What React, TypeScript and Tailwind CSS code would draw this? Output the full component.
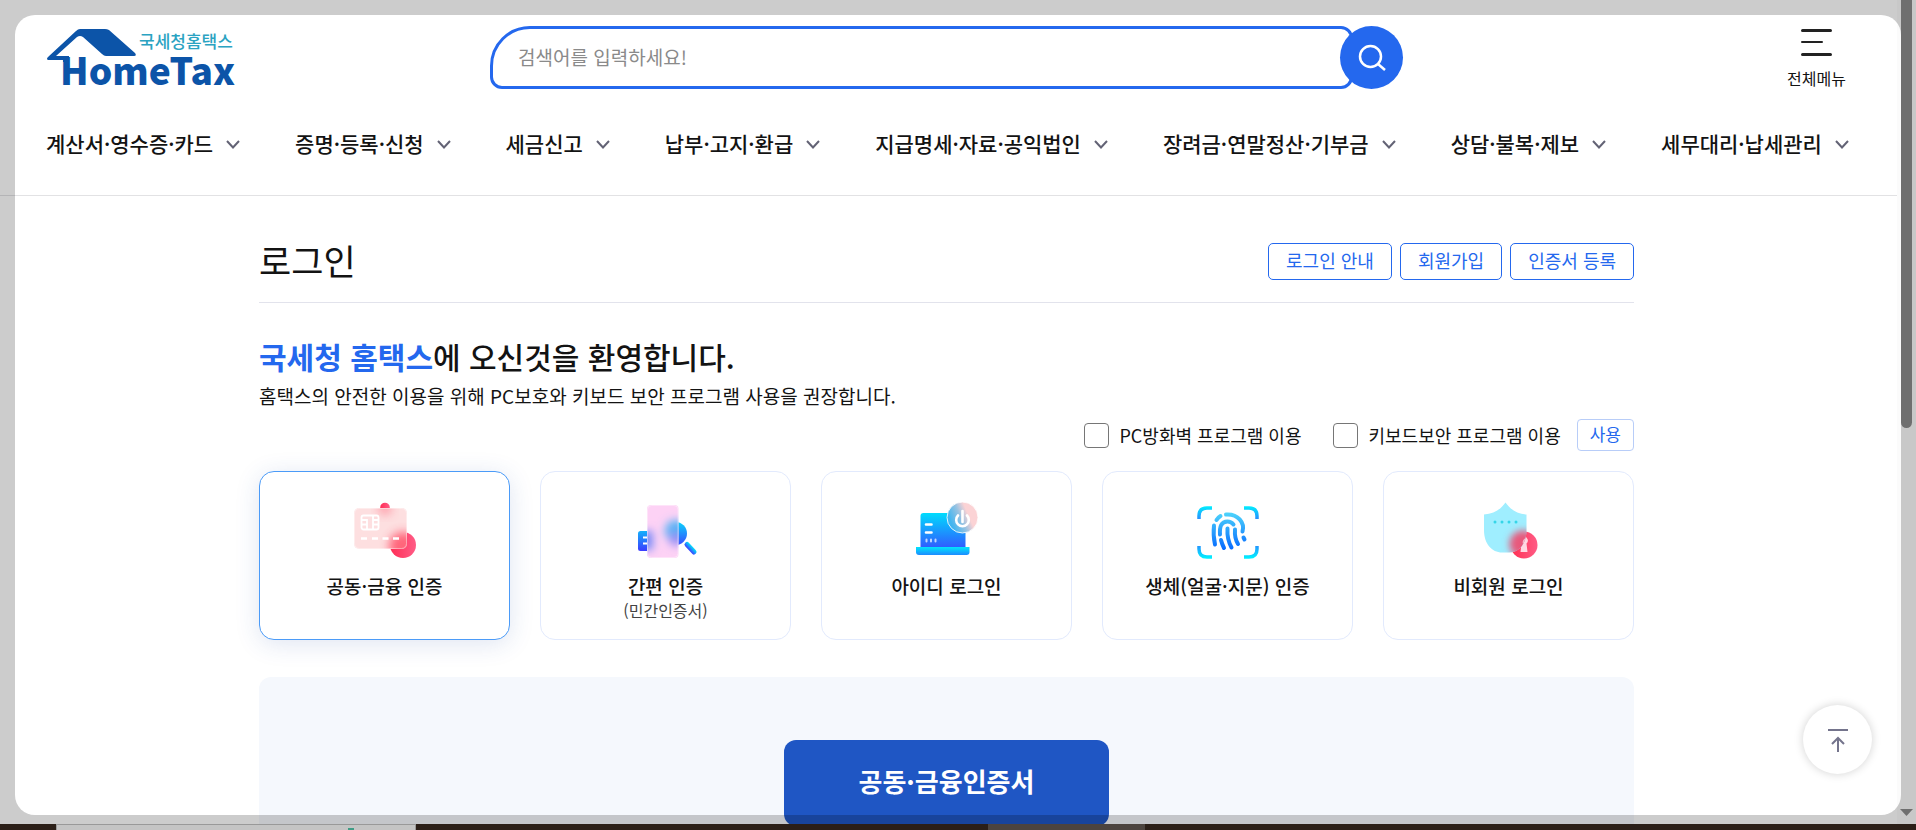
import React, { useState } from "react";

const menus = [
  "계산서·영수증·카드",
  "증명·등록·신청",
  "세금신고",
  "납부·고지·환급",
  "지급명세·자료·공익법인",
  "장려금·연말정산·기부금",
  "상담·불복·제보",
  "세무대리·납세관리",
];

const links = ["로그인 안내", "회원가입", "인증서 등록"];

function Logo() {
  return (
    <svg width="192" height="61" viewBox="0 0 192 61" role="img" aria-label="국세청홈택스 HomeTax">
      <path
        d="M1 29 L29 3 Q31 1 33 1 H58 Q60 1 62 2 L88 25 Q90 28 87 28 H59 Q57 28 55 26 L36 9 Q33 7 30 9 L9 28 H22 V34 H16 V32 H1 Q-1 31 1 29 Z"
        fill="#0c54a8"
      />
      <text x="92" y="20" fontSize="17" fontWeight="500" fill="#2ba3c2">
        국세청홈택스
      </text>
      <text x="13" y="57" fontSize="37" fontWeight="900" fill="#0c54a8">
        HomeTax
      </text>
    </svg>
  );
}

function CardIcon() {
  return (
    <svg width="64" height="64" viewBox="0 0 64 64" aria-hidden="true">
      <defs>
        <linearGradient id="card-red">
          <stop offset="0" stopColor="#ff2d55" />
          <stop offset="1" stopColor="#ff5c86" />
        </linearGradient>
        <clipPath id="card-clip">
          <rect x="1" y="10" width="53" height="41" rx="5" />
        </clipPath>
        <filter id="card-blur" x="-50%" y="-50%" width="200%" height="200%">
          <feGaussianBlur stdDeviation="5" />
        </filter>
      </defs>
      <circle cx="32" cy="9.5" r="4.8" fill="url(#card-red)" />
      <circle cx="50" cy="47" r="13" fill="url(#card-red)" />
      <rect x="1" y="10" width="53" height="41" rx="5" fill="#fddfe0" />
      <g clipPath="url(#card-clip)">
        <circle cx="32" cy="10" r="7" fill="#ff8595" opacity="0.7" filter="url(#card-blur)" />
        <circle cx="50" cy="48" r="14" fill="#ff5870" opacity="0.9" filter="url(#card-blur)" />
      </g>
      <rect x="1.5" y="10.5" width="52" height="40" rx="5" fill="none" stroke="#fff" strokeOpacity="0.4" />
      <g fill="none" stroke="#fff" strokeWidth="1.8">
        <rect x="8.5" y="17.5" width="17" height="14" rx="2" />
        <path d="M8.5 22 H14 V31 M8.5 26.5 H14 M20 17.5 V31 M20 22 H25 M20 26.5 H25" />
      </g>
      <path d="M8 40.5 H14 M19 40.5 H25 M29.5 40.5 H35.5 M40 40.5 H46" stroke="#fff" strokeWidth="2.4" />
    </svg>
  );
}

function PhoneIcon() {
  return (
    <svg width="64" height="64" viewBox="0 0 64 64" aria-hidden="true">
      <defs>
        <linearGradient id="phone-blue" x2="0" y2="1">
          <stop offset="0" stopColor="#0ad3fb" />
          <stop offset="1" stopColor="#3a4bff" />
        </linearGradient>
        <linearGradient id="phone-left" x2="0" y2="1">
          <stop offset="0" stopColor="#14b0fb" />
          <stop offset="1" stopColor="#3b3bff" />
        </linearGradient>
        <linearGradient id="phone-handle" x1="0.7" y1="0.3" x2="0.3" y2="0.7">
          <stop offset="0" stopColor="#05d5fb" />
          <stop offset="1" stopColor="#3a4bff" />
        </linearGradient>
        <clipPath id="phone-clip">
          <rect x="13" y="7" width="31.5" height="53" rx="4" />
        </clipPath>
        <filter id="phone-blur" x="-50%" y="-50%" width="200%" height="200%">
          <feGaussianBlur stdDeviation="4.5" />
        </filter>
      </defs>
      <rect x="4" y="33" width="16" height="20" rx="2.5" fill="url(#phone-left)" />
      <path d="M9 39.5 H14 M9 45.5 H14" stroke="#fff" strokeWidth="2" />
      <circle cx="41.5" cy="35.5" r="11.5" fill="url(#phone-blue)" />
      <path d="M53 46.5 L60 54" stroke="url(#phone-handle)" strokeWidth="5" strokeLinecap="round" />
      <rect x="13" y="7" width="31.5" height="53" rx="4" fill="#fdd2f5" />
      <g clipPath="url(#phone-clip)">
        <g filter="url(#phone-blur)">
          <rect x="4" y="33" width="15" height="19" fill="#7c8cf8" />
          <circle cx="42" cy="33" r="11" fill="#55b2f5" />
          <circle cx="42" cy="41" r="7" fill="#968df5" />
        </g>
      </g>
      <rect x="13.5" y="7.5" width="30.5" height="52" rx="4" fill="none" stroke="#fff" strokeOpacity="0.4" />
    </svg>
  );
}

function LaptopIcon() {
  return (
    <svg width="64" height="64" viewBox="0 0 64 64" aria-hidden="true">
      <defs>
        <linearGradient id="laptop-screen" x2="0" y2="1">
          <stop offset="0" stopColor="#00dcfd" />
          <stop offset="1" stopColor="#305cff" />
        </linearGradient>
        <linearGradient id="laptop-base" x2="0" y2="1">
          <stop offset="0" stopColor="#00e6fc" />
          <stop offset="1" stopColor="#1d8bff" />
        </linearGradient>
        <linearGradient id="laptop-power" x1="0.15" y1="0.7" x2="0.85" y2="0.4">
          <stop offset="0" stopColor="#42b5f0" />
          <stop offset="0.45" stopColor="#95c2e2" />
          <stop offset="0.8" stopColor="#fbd3d5" />
        </linearGradient>
      </defs>
      <path d="M5.5 49.5 V18 Q5.5 15 8.5 15 H50.5 V49.5 Z" fill="url(#laptop-screen)" />
      <path d="M1 49 H54.5 V54 Q54.5 57 51.5 57 H4 Q1 57 1 54 Z" fill="url(#laptop-base)" />
      <g stroke="#fff" strokeLinecap="round" fill="none">
        <path d="M11 26.5 H16.5 M11 34.5 H16.5" strokeWidth="2.6" />
        <path d="M11.5 41.5 V43.5 M16 41.5 V43.5 M20.5 41.5 V43.5" strokeWidth="2" strokeOpacity="0.7" />
      </g>
      <circle cx="47.5" cy="19.5" r="15.5" fill="url(#laptop-power)" stroke="#fff" strokeOpacity="0.85" />
      <g stroke="#fff" strokeWidth="2.6" strokeLinecap="round" fill="none">
        <path d="M47.5 13 V24" />
        <path d="M43 17.5 A6.3 6.3 0 1 0 52 17.5" />
      </g>
    </svg>
  );
}

function FingerprintIcon() {
  return (
    <svg width="64" height="64" viewBox="0 0 64 64" fill="none" aria-hidden="true">
      <defs>
        <linearGradient id="frame-top" gradientUnits="userSpaceOnUse" x1="0" y1="8" x2="0" y2="22">
          <stop offset="0" stopColor="#00f0ff" />
          <stop offset="1" stopColor="#2b86ff" />
        </linearGradient>
        <linearGradient id="frame-bottom" gradientUnits="userSpaceOnUse" x1="0" y1="60" x2="0" y2="46">
          <stop offset="0" stopColor="#00f0ff" />
          <stop offset="1" stopColor="#2b86ff" />
        </linearGradient>
        <linearGradient id="finger" gradientUnits="userSpaceOnUse" x1="0" y1="14" x2="0" y2="51">
          <stop offset="0" stopColor="#4fd6fb" />
          <stop offset="1" stopColor="#066bff" />
        </linearGradient>
      </defs>
      <path d="M3 21 V18 Q3 10 11 10 H16 M48 10 H53 Q61 10 61 18 V21" stroke="url(#frame-top)" strokeWidth="3.5" />
      <path d="M3 48 V51 Q3 59 11 59 H16 M48 59 H53 Q61 59 61 51 V48" stroke="url(#frame-bottom)" strokeWidth="3.5" />
      <g stroke="url(#finger)" strokeWidth="4" strokeLinecap="round">
        <path d="M20.5 22 Q22 19.5 24.5 18" />
        <path d="M30 16.5 C42 15.5 49 25 46.5 33.5" />
        <path d="M18 27.5 C17.3 34 17.5 40 19 46.5" />
        <path d="M24 36.5 C23.5 29 25 23.5 31.5 23.5 Q35 23.5 37.5 26.5" />
        <path d="M25 42 Q26 46 28 50" />
        <path d="M31.5 30.5 C31 38 32.5 44 35.5 49.5" />
        <path d="M39 31.5 C38.5 38 39.5 42 42 46" />
        <path d="M47.5 39.5 L48.5 41.5" />
      </g>
    </svg>
  );
}

function ShieldIcon() {
  const shield = "M28.5 4.5 C33 11 40 16 49.5 16.5 V32 C49.5 46 42 54.5 32 54.5 H25 C15 54.5 7 46 7 32 V16.5 C17 16 24 11 28.5 4.5 Z";
  return (
    <svg width="64" height="64" viewBox="0 0 64 64" aria-hidden="true">
      <defs>
        <linearGradient id="shield-red">
          <stop offset="0" stopColor="#ff2d50" />
          <stop offset="1" stopColor="#ff5c86" />
        </linearGradient>
        <clipPath id="shield-clip">
          <path d={shield} />
        </clipPath>
        <filter id="shield-blur" x="-50%" y="-50%" width="200%" height="200%">
          <feGaussianBlur stdDeviation="3.5" />
        </filter>
      </defs>
      <circle cx="47" cy="47" r="13.5" fill="url(#shield-red)" />
      <path d="M47 38.5 A4 4 0 0 1 49.5 45.5 L50.5 54 H43.5 L44.5 45.5 A4 4 0 0 1 47 38.5 Z" fill="#ffd7e2" />
      <path d={shield} fill="#9feeff" />
      <g clipPath="url(#shield-clip)">
        <circle cx="46" cy="46" r="13.5" fill="#e8587b" filter="url(#shield-blur)" />
        <path d="M49.5 39.5 Q44.5 42 46 46 L44.5 52 L49.5 46 Z" fill="#fbd0dc" fillOpacity="0.8" />
      </g>
      <g fill="#35d5e8">
        <circle cx="18" cy="24" r="1.5" />
        <circle cx="25" cy="24" r="1.5" />
        <circle cx="32" cy="24" r="1.5" />
        <circle cx="39" cy="24" r="1.5" />
      </g>
    </svg>
  );
}

const methods = [
  { title: "공동·금융 인증", icon: <CardIcon /> },
  { title: "간편 인증", sub: "(민간인증서)", icon: <PhoneIcon /> },
  { title: "아이디 로그인", icon: <LaptopIcon /> },
  { title: "생체(얼굴·지문) 인증", icon: <FingerprintIcon /> },
  { title: "비회원 로그인", icon: <ShieldIcon /> },
];

function Header() {
  return (
    <header className="border-b border-[#e2e2e4]">
      <div className="grid grid-cols-[1fr_minmax(0,913px)_1fr] pt-[26px] pl-[47px] pr-[51px]">
        <a href="#" className="h-[63px] justify-self-start pt-0.5">
          <Logo />
        </a>
        <form className="flex items-center" onSubmit={(e) => e.preventDefault()}>
          <input
            type="text"
            aria-label="검색어"
            placeholder="검색어를 입력하세요!"
            className="h-[63px] min-w-0 flex-1 rounded-xl rounded-tl-[40px] border-[3px] border-[#2468ee] pb-0.5 pl-[25px] text-[19px] outline-none placeholder:text-[#8a8a8a]"
          />
          <button
            type="submit"
            aria-label="검색"
            className="-ml-[13px] flex size-[63px] items-center justify-center rounded-full bg-[#2468ee]"
          >
            <svg width="28" height="28" viewBox="0 0 28 28" fill="none" stroke="#fff" strokeWidth="2.5">
              <circle cx="12.5" cy="12.5" r="10.5" />
              <path d="M20 20 L27 26" />
            </svg>
          </button>
        </form>
        <button type="button" className="flex h-[63px] flex-col items-center gap-2.5 justify-self-end pt-[3px]">
          <svg width="31" height="27" viewBox="0 0 31 27" fill="none" stroke="#222" strokeLinecap="round" className="shrink-0">
            <path d="M1.5 1.5 H29.5 M1.5 25.5 H29.5" strokeWidth="3" />
            <path d="M1 13 H21" strokeWidth="2" />
          </svg>
          <span className="text-base leading-6">전체메뉴</span>
        </button>
      </div>
      <nav className="h-[106px] pt-1 pl-[46px] pr-12">
        <ul className="flex h-full items-center justify-between">
          {menus.map((menu) => (
            <li key={menu}>
              <button type="button" className="flex items-center gap-[13px] text-[21px] font-medium whitespace-nowrap">
                {menu}
                <svg width="14" height="9" viewBox="0 0 14 9" fill="none" stroke="#636375" strokeWidth="2">
                  <path d="M1 1 L7 7.5 L13 1" />
                </svg>
              </button>
            </li>
          ))}
        </ul>
      </nav>
    </header>
  );
}

function Scrollbar() {
  return (
    <div className="flex w-[19px] shrink-0 flex-col items-center justify-between bg-[#fbfbfb]" aria-hidden="true">
      <div className="h-[52%] w-[11px] rounded-b-md bg-[#8b8b8b]" />
      <svg width="13" height="7" viewBox="0 0 13 7" className="mb-2">
        <path d="M0 0 H13 L6.5 7 Z" fill="#8b8b8b" />
      </svg>
    </div>
  );
}

export default function App() {
  const [selected, setSelected] = useState(0);

  return (
    <div lang="ko" className="flex h-screen flex-col overflow-hidden bg-white font-['Noto_Sans_CJK_KR',sans-serif] text-[#131313]">
      <div className="relative flex min-h-0 flex-1 overflow-hidden">
        <div className="min-w-0 flex-1 overflow-hidden">
          <Header />
          <main className="pt-[26px] pr-1">
            <div className="mx-auto w-full max-w-[1375px]">
              <div className="flex h-[81px] items-center justify-between border-b border-[#e2e3ec] pb-0.5">
                <h1 className="pb-0.5 text-[35px] leading-10">로그인</h1>
                <div className="flex gap-2">
                  {links.map((link) => (
                    <button
                      key={link}
                      type="button"
                      className="h-[37px] rounded-[5px] border border-[#2468ee] px-[17px] pb-0.5 text-lg leading-6 text-[#2468ee]"
                    >
                      {link}
                    </button>
                  ))}
                </div>
              </div>

              <h2 className="mt-[33px] text-[30px] leading-10 font-medium">
                <strong className="font-bold text-[#2468ee]">국세청 홈택스</strong>에 오신것을 환영합니다.
              </h2>
              <p className="mt-1.5 text-[19px] leading-7">
                홈택스의 안전한 이용을 위해 PC보호와 키보드 보안 프로그램 사용을 권장합니다.
              </p>

              <div className="mt-[9px] flex items-center justify-end text-lg leading-6">
                <label className="mr-8 flex items-center gap-2.5">
                  <input type="checkbox" className="size-[25px] appearance-none rounded border border-[#767676] checked:bg-[#2468ee]" />
                  PC방화벽 프로그램 이용
                </label>
                <label className="mr-4 flex items-center gap-2.5">
                  <input type="checkbox" className="size-[25px] appearance-none rounded border border-[#767676] checked:bg-[#2468ee]" />
                  키보드보안 프로그램 이용
                </label>
                <button type="button" className="h-8 rounded border border-[#b8cdf8] px-3 pb-0.5 text-[17px] leading-6 text-[#2468ee]">
                  사용
                </button>
              </div>

              <div className="mt-5 grid grid-cols-5 gap-[30px]">
                {methods.map((method, i) => (
                  <button
                    key={method.title}
                    type="button"
                    onClick={() => setSelected(i)}
                    className={
                      "flex h-[169px] flex-col items-center rounded-[15px] border bg-white pt-[26px] " +
                      (i === selected
                        ? "border-[#4b9bf8] shadow-[0_4px_24px_rgba(40,80,170,0.15)]"
                        : "border-[#e2eafd]")
                    }
                  >
                    {method.icon}
                    <span className="mt-3 text-[19px] leading-6 font-medium">{method.title}</span>
                    {method.sub && <span className="text-base leading-6 text-[#444]">{method.sub}</span>}
                  </button>
                ))}
              </div>

              <section className="mt-[37px] flex justify-center rounded-xl bg-[#f5f8fd] pt-[63px] pb-16">
                <button type="button" className="h-[86px] w-[325px] rounded-xl bg-[#1f56c4] pb-1.5 text-[26px] font-bold text-white">
                  공동·금융인증서
                </button>
              </section>
            </div>
          </main>
        </div>
        <Scrollbar />

        <button
          type="button"
          aria-label="맨 위로"
          className="absolute right-11 bottom-[50px] flex size-[69px] items-center justify-center rounded-full bg-white shadow-[0_0_10px_rgba(0,0,0,0.18)]"
        >
          <svg width="20" height="24" viewBox="0 0 20 24" fill="none" stroke="#74748c" strokeWidth="2">
            <path d="M0 2 H20 M10 24 V10 M4 16 L10 10 L16 16" />
          </svg>
        </button>

        {/* dimmed frame round the visible area */}
        <div className="pointer-events-none absolute inset-x-[15px] top-[15px] bottom-[9px] rounded-[20px] shadow-[0_0_0_40px_rgba(0,0,0,0.2)]" />
      </div>

      <footer className="flex h-1.5 shrink-0 bg-[#2b1f18]" aria-hidden="true">
        <div className="ml-14 w-[360px] border border-b-0 border-[#999] bg-[#c4c4c4]">
          <div className="mt-[3px] ml-[291px] h-0.5 w-1.5 bg-[#3f9c86]" />
        </div>
        <div className="ml-[572px] w-[157px] bg-[#4c443f]" />
      </footer>
    </div>
  );
}
